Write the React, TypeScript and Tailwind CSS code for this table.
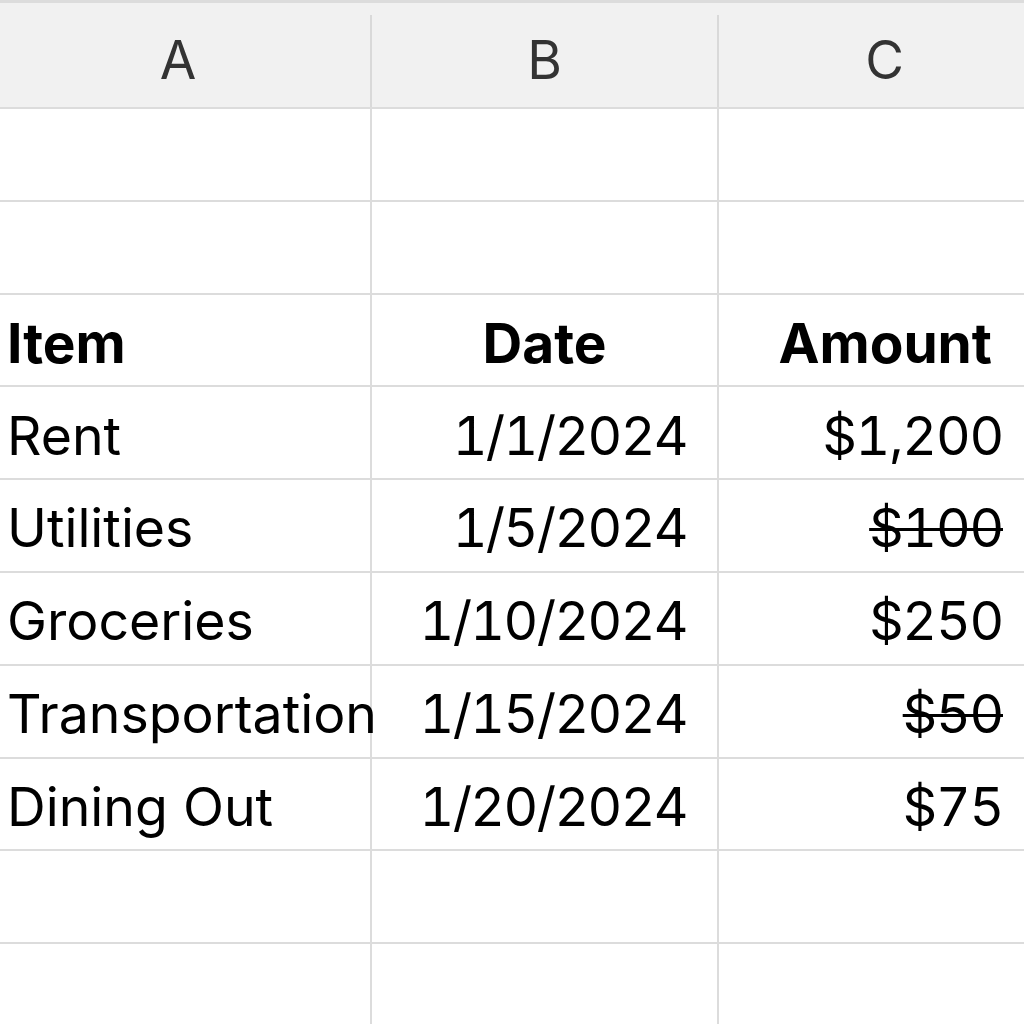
import React from 'react'

const ROWS = [
  { item: '', date: '', amount: '' },
  { item: '', date: '', amount: '' },
  { item: 'Item', date: 'Date', amount: 'Amount', head: true },
  { item: 'Rent', date: '1/1/2024', amount: '$1,200' },
  { item: 'Utilities', date: '1/5/2024', amount: '$100', struck: true },
  { item: 'Groceries', date: '1/10/2024', amount: '$250' },
  { item: 'Transportation', date: '1/15/2024', amount: '$50', struck: true },
  { item: 'Dining Out', date: '1/20/2024', amount: '$75' },
  { item: '', date: '', amount: '' },
  { item: '', date: '', amount: '' },
]

export default function App() {
  return (
    <div
      className="h-[1024px] w-[1024px] overflow-hidden bg-white text-black"
      style={{ fontFamily: 'Inter, "Noto Sans", sans-serif' }}
    >
      {/* column letters */}
      <div className="flex h-[109px] border-t-[3px] border-b-2 border-[#dcdcdc] bg-[#f1f1f1] pt-[12px]">
        <div className="flex w-[372px] items-center justify-center border-r-2 border-[#d9d9d9] pr-[14px] text-[53px] text-[#333]">A</div>
        <div className="flex w-[347px] items-center justify-center border-r-2 border-[#d9d9d9] text-[53px] text-[#333]">B</div>
        <div className="flex flex-1 items-center justify-center pl-[26px] text-[53px] text-[#333]">C</div>
      </div>

      {ROWS.map((r, i) => (
        <div key={i} className="flex h-[92.8px] border-b-2 border-[#dcdcdc]">
          <div
            className={`flex w-[372px] items-center overflow-visible whitespace-nowrap border-r-2 border-[#dcdcdc] pl-[7px] pt-[6px] ${r.head ? 'text-[55px] font-bold' : 'text-[53.6px]'}`}
          >
            <span className="relative z-10">{r.item}</span>
          </div>
          <div
            className={`flex w-[347px] items-center whitespace-nowrap border-r-2 border-[#dcdcdc] pt-[6px] ${r.head ? 'justify-center text-[55px] font-bold' : 'justify-end pr-[30px] text-[53.6px] tabular-nums tracking-[-1.6px]'}`}
          >
            {r.date}
          </div>
          <div
            className={`flex flex-1 items-center justify-end whitespace-nowrap pt-[6px] ${r.head ? 'pr-[32px] text-[55px] font-bold' : 'pr-[21px] text-[53.6px] tabular-nums tracking-[-1.2px]'}`}
          >
            <span className={r.struck ? 'line-through decoration-[3px]' : ''}>{r.amount}</span>
          </div>
        </div>
      ))}
    </div>
  )
}
